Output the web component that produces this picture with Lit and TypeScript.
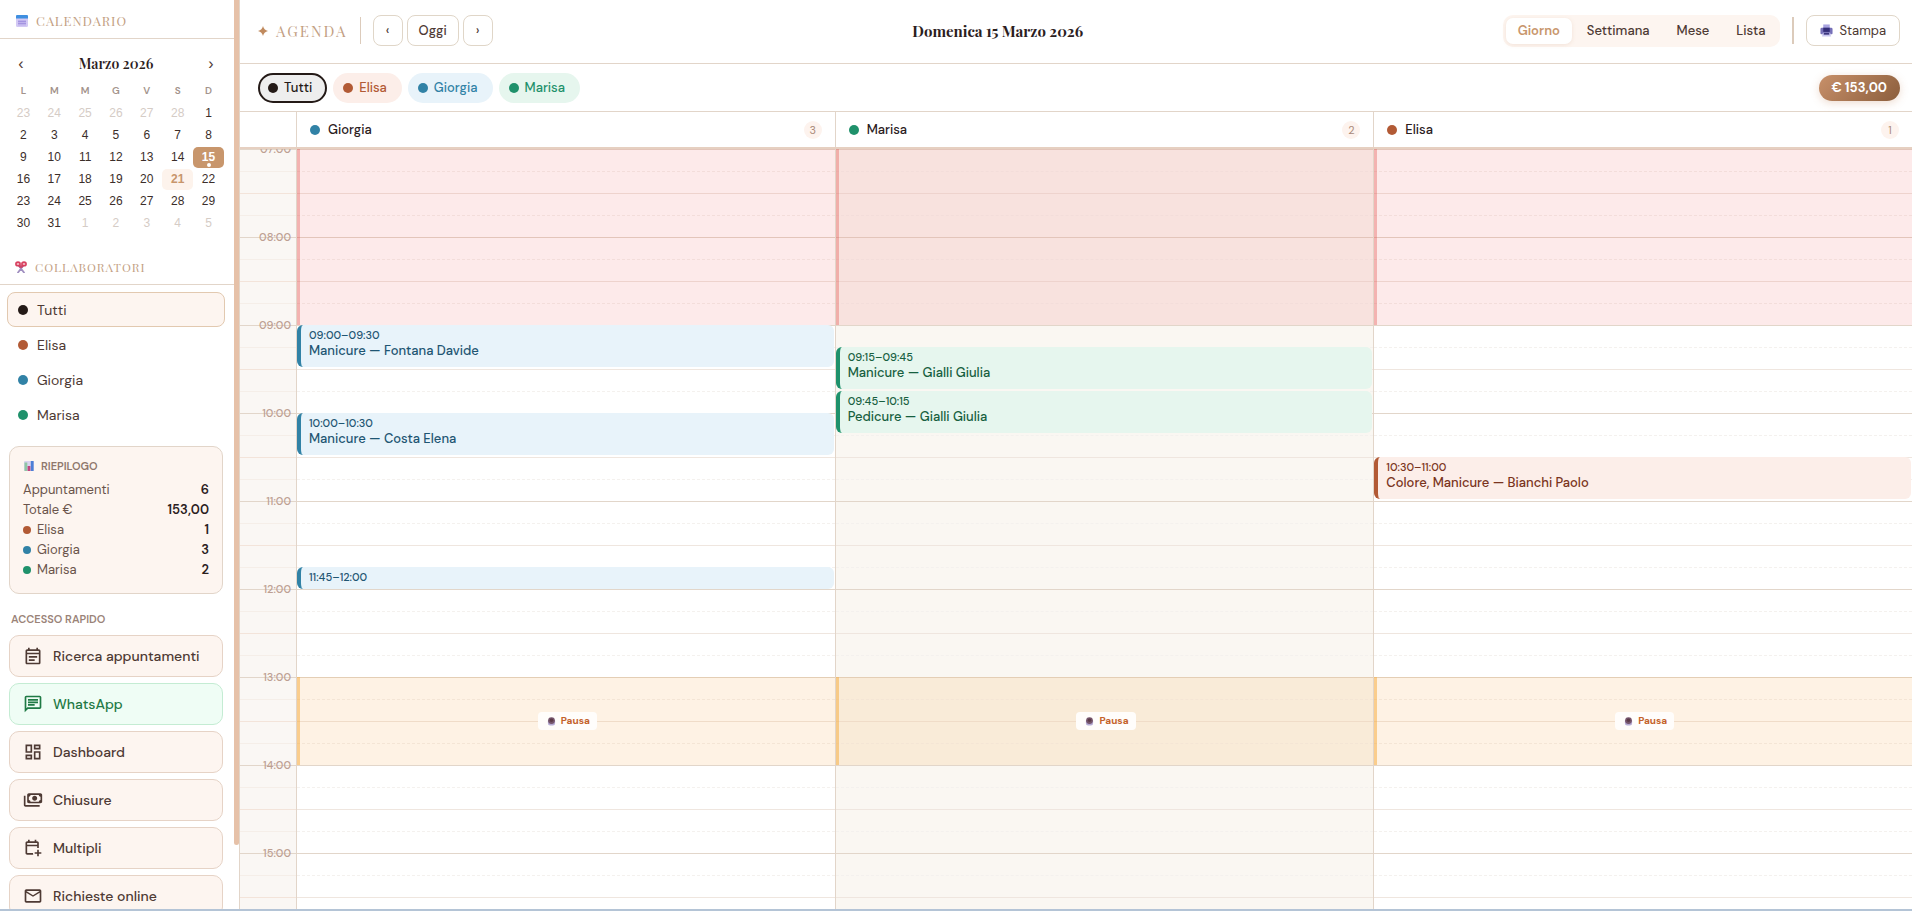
import { LitElement, html, css, svg, nothing } from "lit";
import { customElement, state } from "lit/decorators.js";
import { classMap } from "lit/directives/class-map.js";
import { styleMap } from "lit/directives/style-map.js";

type Person = "tutti" | "elisa" | "giorgia" | "marisa";

interface Appointment {
  start: string;
  end: string;
  title: string;
}

interface Column {
  id: Person;
  name: string;
  appointments: Appointment[];
}

const NAMES: Record<Person, string> = {
  tutti: "Tutti",
  elisa: "Elisa",
  giorgia: "Giorgia",
  marisa: "Marisa",
};

const PEOPLE: Person[] = ["tutti", "elisa", "giorgia", "marisa"];

const COLUMNS: Column[] = [
  {
    id: "giorgia",
    name: "Giorgia",
    appointments: [
      { start: "09:00", end: "09:30", title: "Manicure — Fontana Davide" },
      { start: "10:00", end: "10:30", title: "Manicure — Costa Elena" },
      { start: "11:45", end: "12:00", title: "" },
    ],
  },
  {
    id: "marisa",
    name: "Marisa",
    appointments: [
      { start: "09:15", end: "09:45", title: "Manicure — Gialli Giulia" },
      { start: "09:45", end: "10:15", title: "Pedicure — Gialli Giulia" },
    ],
  },
  {
    id: "elisa",
    name: "Elisa",
    appointments: [
      { start: "10:30", end: "11:00", title: "Colore, Manicure — Bianchi Paolo" },
    ],
  },
];

const FIRST_HOUR = 7;
const LAST_HOUR = 20;
const SLOTS = Array.from({ length: (LAST_HOUR - FIRST_HOUR) * 4 }, (_, i) => i);
const HOURS = Array.from({ length: LAST_HOUR - FIRST_HOUR }, (_, i) => FIRST_HOUR + i);

/* Grid line of a time of day: one row for each quarter of an hour. */
const rowOf = (time: string) => {
  const [h, m] = time.split(":").map(Number);
  return (h - FIRST_HOUR) * 4 + m / 15 + 1;
};
const rows = (start: string, end: string) => styleMap({ gridRow: `${rowOf(start)} / ${rowOf(end)}` });

const WEEKS = [
  [-23, -24, -25, -26, -27, -28, 1],
  [2, 3, 4, 5, 6, 7, 8],
  [9, 10, 11, 12, 13, 14, 15],
  [16, 17, 18, 19, 20, 21, 22],
  [23, 24, 25, 26, 27, 28, 29],
  [30, 31, -1, -2, -3, -4, -5],
];

const icon24 = (d: string) => svg`<svg class="icon" viewBox="0 0 24 24" aria-hidden="true"><path d=${d}></path></svg>`;
const icon960 = (d: string) => svg`<svg class="icon" viewBox="0 -960 960 960" aria-hidden="true"><path d=${d}></path></svg>`;

const SHORTCUTS = [
  {
    label: "Ricerca appuntamenti",
    icon: icon24("M19 4h-1V2h-2v2H8V2H6v2H5c-1.11 0-1.99.9-1.99 2L3 20c0 1.1.89 2 2 2h14c1.1 0 2-.9 2-2V6c0-1.1-.9-2-2-2zm0 16H5V10h14v10zm0-12H5V6h14v2zM7 12h10v2H7zm0 4h7v2H7z"),
  },
  {
    label: "WhatsApp",
    green: true,
    icon: icon24("M4 4h16v12H5.17L4 17.17V4m0-2c-1.1 0-1.99.9-1.99 2L2 22l4-4h14c1.1 0 2-.9 2-2V4c0-1.1-.9-2-2-2H4zm2 10h8v2H6v-2zm0-3h12v2H6V9zm0-3h12v2H6V6z"),
  },
  {
    label: "Dashboard",
    icon: icon24("M19 5v2h-4V5h4M9 5v6H5V5h4m10 8v6h-4v-6h4M9 17v2H5v-2h4M21 3h-8v6h8V3zM11 3H3v10h8V3zm10 8h-8v10h8V11zm-10 4H3v6h8v-6z"),
  },
  {
    label: "Chiusure",
    icon: icon960("M560-440q-50 0-85-35t-35-85 35-85 85-35 85 35 35 85-35 85-85 35ZM280-320q-33 0-56.500-23.500T200-400v-320q0-33 23.500-56.500T280-800h560q33 0 56.500 23.500T920-720v320q0 33-23.500 56.500T840-320H280Zm80-80h400q0-33 23.500-56.500T840-480v-160q-33 0-56.500-23.500T760-720H360q0 33-23.500 56.500T280-640v160q33 0 56.500 23.500T360-400Zm440 240H120q-33 0-56.500-23.500T40-240v-440h80v440h680v80Z"),
  },
  {
    label: "Multipli",
    icon: icon960("M680-80v-120H560v-80h120v-120h80v120h120v80H760v120h-80Zm-480-80q-33 0-56.500-23.500T120-240v-480q0-33 23.500-56.500T200-800h40v-80h80v80h240v-80h80v80h40q33 0 56.500 23.500T760-720v244q-20-3-40-3t-40 3v-84H200v320h280q0 20 3 40t11 40H200Zm0-480h480v-80H200v80Z"),
  },
  {
    label: "Richieste online",
    icon: icon24("M22 6c0-1.1-.9-2-2-2H4c-1.1 0-2 .9-2 2v12c0 1.1.9 2 2 2h16c1.1 0 2-.9 2-2V6zm-2 0l-8 5-8-5h16zm0 12H4V8l8 5 8-5v10z"),
  },
];

const calendarGlyph = svg`<svg class="glyph" viewBox="0 0 12 12" aria-hidden="true">
  <path d="M0 2h12v8.500a1.500 1.500 0 0 1-1.500 1.500h-9A1.500 1.500 0 0 1 0 10.500z" fill="#d3c9f4"></path>
  <path d="M0 1a1 1 0 0 1 1-1h10a1 1 0 0 1 1 1v2.500H0z" fill="#3f8fe0"></path>
  <path d="M3 5v5.500M5 5v5.500M7 5v5.500M9 5v5.500M2 6.500h8M2 8.500h8" stroke="#9a86dd" stroke-width=".7"></path>
</svg>`;

const scissorsGlyph = svg`<svg class="glyph" viewBox="0 0 12 12" aria-hidden="true">
  <path d="M4 5l5 6.500M8 5l-5 6.500" stroke="#a08fc0" stroke-width="1.800" stroke-linecap="round"></path>
  <path d="M6 6.500L4 4M6 6.500L8 4" stroke="#c9476a" stroke-width="2.200"></path>
  <ellipse cx="3" cy="2.900" rx="2.100" ry="1.800" fill="#f2b9c4" stroke="#d8405f" stroke-width="1.600"></ellipse>
  <ellipse cx="9" cy="2.900" rx="2.100" ry="1.800" fill="#f2b9c4" stroke="#d8405f" stroke-width="1.600"></ellipse>
</svg>`;

const chartGlyph = svg`<svg class="glyph" viewBox="0 0 12 12" aria-hidden="true">
  <rect x="1" y="1" width="10" height="10" rx="1" fill="#d9d3ee"></rect>
  <rect x="1.500" y="2.500" width="2.800" height="8.500" fill="#8fc6a4"></rect>
  <rect x="4.600" y="6" width="2.800" height="5" fill="#c2457f"></rect>
  <rect x="7.800" y="1" width="2.800" height="10" fill="#4d7fd6"></rect>
</svg>`;

const printerGlyph = svg`<svg class="glyph large" viewBox="0 0 14 14" aria-hidden="true">
  <path d="M3.500 .5h7V5h-7z" fill="#a9a4e0"></path>
  <path d="M2 4h10a1.500 1.500 0 0 1 1.500 1.500V10a1 1 0 0 1-1 1h-11a1 1 0 0 1-1-1V5.500A1.500 1.500 0 0 1 2 4z" fill="#7670b8"></path>
  <path d="M3.500 4h7v4.500h-7z" fill="#332e78"></path>
  <path d="M3 9.500h8l.8 4H2.200z" fill="#c9c7f0"></path>
  <path d="M4 9.500h6v2H4z" fill="#3d377f"></path>
</svg>`;

const coffeeGlyph = svg`<svg class="glyph small" viewBox="0 0 10 10" aria-hidden="true">
  <path d="M1 4h8v3a2.500 2.500 0 0 1-2.500 2.500h-3A2.500 2.500 0 0 1 1 7z" fill="#b6abd4"></path>
  <circle cx="5" cy="4" r="3.800" fill="#75556c"></circle>
  <circle cx="5" cy="3.600" r="2" fill="#5c3a48"></circle>
</svg>`;

@customElement("app-root")
export class AppRoot extends LitElement {
  static styles = css`
    :host {
      --line: #e2d5c9;
      --soft: #fdf5f0;
      --gold: #c8966c;
      --ink: #4e3a34;
      --muted: #9a8378;
      --slot: 22px;
      --sans: "DM Sans", Inter, "Open Sans", sans-serif;
      --serif: "Playfair Display", "Liberation Serif", serif;
      display: flex;
      height: 100vh;
      box-sizing: border-box;
      border-bottom: 2px solid #b4c4d6;
      background: #fff;
      color: var(--ink);
      font: 13px/18px var(--sans);
    }
    * { box-sizing: border-box; }
    button { font: inherit; color: inherit; margin: 0; padding: 0; border: 0; background: none; cursor: pointer; }
    h1, h2, h3, p, ul, dl, dd { margin: 0; padding: 0; font: inherit; list-style: none; }

    .tutti { --c: #241a17; --bg: #eeeeee; --deep: #241a17; }
    .elisa { --c: #b25a35; --bg: #fceee9; --deep: #7a3420; }
    .giorgia { --c: #3182a6; --bg: #e8f3fa; --deep: #1f5673; }
    .marisa { --c: #1f916b; --bg: #e6f6ee; --deep: #17603f; }
    .dot { flex: none; width: 10px; height: 10px; border-radius: 50%; background: var(--c); }
    .dot.small { width: 8px; height: 8px; }
    .glyph { flex: none; display: block; width: 12px; height: 12px; }
    .glyph.large { width: 13px; height: 13px; }
    .glyph.small { width: 9px; height: 9px; }

    /* Sidebar */
    .side { position: relative; flex: none; width: 240px; border-right: 1px solid var(--line); overflow: hidden; }
    .scroll { height: 100%; overflow-y: auto; scrollbar-width: none; }
    .thumb { position: absolute; top: 0; right: 0; width: 5px; height: 93%; border-radius: 0 0 3px 3px; background: #e6c1a8; }
    .head {
      display: flex; align-items: center; gap: 8px; height: 39px; padding: 4px 16px 0;
      border-bottom: 1px solid var(--line);
      font: 13px/18px var(--serif); letter-spacing: 1px; color: #c3a083; text-transform: uppercase;
    }
    .head.minor { padding-left: 15px; font-size: 12px; }
    .cal { padding: 13px 15px 12px 8px; }
    .cal-nav { display: flex; justify-content: space-between; align-items: center; height: 24px; padding: 0 6px; }
    .cal-nav h2 { font: 600 14px/24px var(--serif); color: #2b201d; }
    .cal-nav button { width: 14px; font: 16px/22px "Liberation Sans", Arial, sans-serif; }
    .days { width: 100%; table-layout: fixed; border-collapse: collapse; margin-top: 4px; }
    .days th { padding: 0; height: 22px; font-size: 10px; line-height: 22px; font-weight: 600; color: #a3938b; }
    .days td { padding: 0; height: 22px; text-align: center; }
    .day { position: relative; width: 100%; height: 21px; border-radius: 5px; font-family: "Liberation Sans", Arial, sans-serif; font-size: 12px; line-height: 21px; color: #3b2e2a; }
    .day.out { color: #d5ccc6; }
    .day.today { background: #fdf3ec; color: var(--gold); font-weight: 700; }
    .day.on { background: var(--gold); color: #fff; font-weight: 700; }
    .day.on::after { content: ""; position: absolute; left: 50%; bottom: 1px; width: 4px; height: 4px; margin-left: -2px; border-radius: 50%; background: #fff; }

    .people { padding: 7px 14px 0 7px; }
    .person { display: flex; align-items: center; gap: 9px; width: 100%; height: 35px; padding: 0 10px; border: 1px solid transparent; border-radius: 8px; font-size: 14px; }
    .person.on { background: var(--soft); border-color: #e2c9b0; }

    .summary { margin: 14px 16px 0 9px; padding: 9px 13px 13px; border: 1px solid var(--line); border-radius: 10px; background: var(--soft); }
    .summary h3 { display: flex; align-items: center; gap: 6px; margin-bottom: 4px; font-size: 11px; line-height: 20px; font-weight: 600; text-transform: uppercase; color: #8f776c; }
    .summary div { display: flex; align-items: center; justify-content: space-between; height: 20px; color: #6a544b; }
    .summary dt { display: flex; align-items: center; gap: 6px; }
    .summary dd { font-weight: 600; color: #2b201d; }

    .quick { padding: 16px 16px 16px 9px; }
    .quick h3 { padding: 0 2px; margin-bottom: 7px; font-size: 11px; line-height: 18px; font-weight: 600; text-transform: uppercase; color: var(--muted); }
    .quick ul { display: grid; gap: 6px; }
    .shortcut { display: flex; align-items: center; gap: 10px; width: 100%; height: 42px; padding: 0 13px; border: 1px solid #e6d3c6; border-radius: 10px; background: var(--soft); color: var(--ink); font-size: 14px; font-weight: 500; }
    .shortcut.green { background: #effdf5; border-color: #c4ecd3; color: #1f7a45; }
    .icon { flex: none; width: 20px; height: 20px; fill: currentColor; }

    /* Top bars */
    .main { display: flex; flex-direction: column; flex: 1; min-width: 0; }
    .top { display: flex; align-items: center; justify-content: space-between; flex: none; height: 64px; padding: 0 12px 2px 18px; border-bottom: 1px solid var(--line); }
    .group { display: flex; align-items: center; gap: 12px; }
    .brand { display: flex; align-items: center; gap: 8px; font: 15px/24px var(--serif); letter-spacing: 2px; color: #c3a083; }
    .brand svg { width: 10px; height: 10px; fill: #c08a5e; }
    .rule { width: 1px; height: 27px; background: #dccbbb; }
    .rule.thick { width: 2px; }
    .steps { display: flex; gap: 4px; }
    .btn { display: flex; align-items: center; justify-content: center; gap: 6px; height: 31px; min-width: 30px; padding: 0 11px; border: 1px solid #e0d6c8; border-radius: 8px; font-weight: 500; }
    .btn.print { padding: 0 13px; font-weight: 400; }
    .date { font: bold 15px/24px var(--serif); color: #2b201d; }
    .views { display: flex; gap: 3px; padding: 3px; border-radius: 10px; background: var(--soft); }
    .view { height: 26px; padding: 0 12px; border-radius: 7px; font-weight: 500; }
    .view.on { background: #fff; color: var(--gold); font-weight: 600; box-shadow: 0 1px 4px rgba(180, 130, 90, .15); }

    .filters { display: flex; align-items: center; justify-content: space-between; flex: none; height: 48px; padding: 0 12px 0 18px; border-bottom: 1px solid var(--line); }
    .chips { display: flex; gap: 6px; }
    .chip { display: flex; align-items: center; gap: 6px; height: 30px; padding: 0 13px 0 8px; border: 2px solid transparent; border-radius: 15px; background: var(--bg); color: var(--c); font-weight: 500; }
    .chip.on { border-color: var(--c); }
    .total { padding: 4px 13px; border-radius: 13px; background: linear-gradient(135deg, #c8906a, #8b5e3c); color: #fff; font-weight: 700; box-shadow: 0 2px 8px rgba(200, 140, 100, .3); }

    /* Day board */
    .heads, .board { display: grid; grid-template-columns: 56px repeat(3, minmax(0, 1fr)); }
    .heads { flex: none; height: 37px; border-bottom: 2px solid #e6d0c1; }
    .col-head { display: flex; align-items: center; gap: 8px; padding: 0 13px; border-left: 1px solid var(--line); font-weight: 500; color: #2b201d; }
    .count { margin-left: auto; min-width: 18px; padding: 0 5px; border-radius: 9px; background: #fdf3ee; font-size: 11px; font-weight: 400; text-align: center; color: #a98a79; }
    .viewport { flex: 1; min-height: 0; overflow-y: auto; scrollbar-width: none; }
    .hours, .lane { display: grid; grid-template-columns: minmax(0, 1fr); grid-template-rows: repeat(52, var(--slot)); }
    .hours { background: #faf7f4; }
    .lane { border-left: 1px solid var(--line); }
    .lane.marisa { background: #faf7f2; }
    .slot { grid-column: 1; border-top: 1px dashed #f4f1ee; }
    .hours .slot { border-top-style: solid; border-top-color: #f5eee8; }
    .slot.half { border-top: 1px solid #efe6df; }
    .hours .slot.half { border-top-color: #f3e4da; }
    .slot.hour, .hours .slot.hour { border-top: 1px solid #e2d6ca; }
    .label { grid-column: 1; justify-self: end; height: 16px; margin: -8px 5px 0 0; font-size: 11px; line-height: 17px; font-weight: 500; color: #bd9f92; }
    .block { grid-column: 1; z-index: 1; display: flex; align-items: center; justify-content: center; border-left: 3px solid; }
    .block.closed { background: rgba(236, 65, 65, .11); border-color: rgba(226, 90, 85, .38); }
    .block.pause { background: rgba(250, 155, 50, .13); border-color: rgba(245, 175, 70, .55); }
    .pill { display: flex; align-items: center; gap: 5px; height: 18px; padding: 0 7px 0 9px; border-radius: 4px; background: #fffdfb; font-size: 10px; font-weight: 700; color: #c4622a; }
    .event { grid-column: 1; z-index: 2; display: flex; flex-direction: column; margin: 0 1px 2px 0; padding: 3px 8px 0; overflow: hidden; border-left: 4px solid var(--c); border-radius: 6px; background: var(--bg); color: var(--deep); text-align: left; }
    .event.short { margin-bottom: 0; }
    .event time { font-size: 11px; line-height: 15px; font-weight: 500; }
    .event strong { font-size: 13px; line-height: 16px; font-weight: 500; }
  `;

  @state() private person: Person = "tutti";
  @state() private view = "Giorno";

  private renderDay(n: number) {
    const out = n < 0;
    return html`<td><button class=${classMap({ day: true, out, today: n === 21, on: n === 15 })}>${Math.abs(n)}</button></td>`;
  }

  private renderSide() {
    return html`
      <aside class="side">
        <div class="scroll">
          <h2 class="head">${calendarGlyph}Calendario</h2>
          <section class="cal">
            <div class="cal-nav">
              <button aria-label="Mese precedente">‹</button>
              <h2>Marzo 2026</h2>
              <button aria-label="Mese successivo">›</button>
            </div>
            <table class="days">
              <thead><tr>${["L", "M", "M", "G", "V", "S", "D"].map((d) => html`<th scope="col">${d}</th>`)}</tr></thead>
              <tbody>${WEEKS.map((w) => html`<tr>${w.map((n) => this.renderDay(n))}</tr>`)}</tbody>
            </table>
          </section>
          <h2 class="head minor">${scissorsGlyph}Collaboratori</h2>
          <ul class="people">
            ${PEOPLE.map((p) => html`<li>
              <button class="person ${p} ${p === this.person ? "on" : ""}" @click=${() => (this.person = p)}>
                <span class="dot"></span>${NAMES[p]}
              </button>
            </li>`)}
          </ul>
          <section class="summary">
            <h3>${chartGlyph}Riepilogo</h3>
            <dl>
              <div><dt>Appuntamenti</dt><dd>6</dd></div>
              <div><dt>Totale €</dt><dd>153,00</dd></div>
              <div class="elisa"><dt><span class="dot small"></span>Elisa</dt><dd>1</dd></div>
              <div class="giorgia"><dt><span class="dot small"></span>Giorgia</dt><dd>3</dd></div>
              <div class="marisa"><dt><span class="dot small"></span>Marisa</dt><dd>2</dd></div>
            </dl>
          </section>
          <nav class="quick">
            <h3>Accesso rapido</h3>
            <ul>
              ${SHORTCUTS.map((s) => html`<li><button class="shortcut ${s.green ? "green" : ""}">${s.icon}${s.label}</button></li>`)}
            </ul>
          </nav>
        </div>
        <div class="thumb"></div>
      </aside>
    `;
  }

  private renderSlots() {
    return SLOTS.map(
      (i) => html`<div
        class=${classMap({ slot: true, hour: i % 4 === 0, half: i % 4 === 2 })}
        style=${styleMap({ gridRow: `${i + 1}` })}
      ></div>`,
    );
  }

  private renderLane(c: Column) {
    return html`
      <div class="lane ${c.id}">
        ${this.renderSlots()}
        <div class="block closed" style=${rows("07:00", "09:00")}></div>
        <div class="block pause" style=${rows("13:00", "14:00")}>
          <span class="pill">${coffeeGlyph}Pausa</span>
        </div>
        ${c.appointments.map(
          (a) => html`<button class="event ${a.title ? "" : "short"}" style=${rows(a.start, a.end)}>
            <time>${a.start}–${a.end}</time>
            ${a.title ? html`<strong>${a.title}</strong>` : nothing}
          </button>`,
        )}
      </div>
    `;
  }

  render() {
    return html`
      ${this.renderSide()}
      <main class="main">
        <header class="top">
          <div class="group">
            <h1 class="brand">
              <svg viewBox="0 0 12 12" aria-hidden="true"><path d="M6 0c.8 3.200 2.500 5 6 6-3.500 1-5.200 2.800-6 6-.8-3.200-2.500-5-6-6 3.500-1 5.200-2.800 6-6z"></path></svg>
              AGENDA
            </h1>
            <span class="rule"></span>
            <div class="steps">
              <button class="btn" aria-label="Giorno precedente">‹</button>
              <button class="btn">Oggi</button>
              <button class="btn" aria-label="Giorno successivo">›</button>
            </div>
          </div>
          <h2 class="date">Domenica 15 Marzo 2026</h2>
          <div class="group">
            <div class="views">
              ${["Giorno", "Settimana", "Mese", "Lista"].map(
                (v) => html`<button class=${classMap({ view: true, on: v === this.view })} @click=${() => (this.view = v)}>${v}</button>`,
              )}
            </div>
            <span class="rule thick"></span>
            <button class="btn print">${printerGlyph}Stampa</button>
          </div>
        </header>
        <div class="filters">
          <div class="chips">
            ${PEOPLE.map((p) => html`<button class="chip ${p} ${p === this.person ? "on" : ""}" @click=${() => (this.person = p)}>
              <span class="dot"></span>${NAMES[p]}
            </button>`)}
          </div>
          <span class="total">€ 153,00</span>
        </div>
        <div class="heads">
          <span></span>
          ${COLUMNS.map((c) => html`<div class="col-head ${c.id}">
            <span class="dot"></span>${c.name}<span class="count">${c.appointments.length}</span>
          </div>`)}
        </div>
        <div class="viewport">
          <div class="board">
            <div class="hours">
              ${this.renderSlots()}
              ${HOURS.map((h) => {
                const t = `${String(h).padStart(2, "0")}:00`;
                return html`<time class="label" style=${styleMap({ gridRow: `${rowOf(t)}` })}>${t}</time>`;
              })}
            </div>
            ${COLUMNS.map((c) => this.renderLane(c))}
          </div>
        </div>
      </main>
    `;
  }
}
